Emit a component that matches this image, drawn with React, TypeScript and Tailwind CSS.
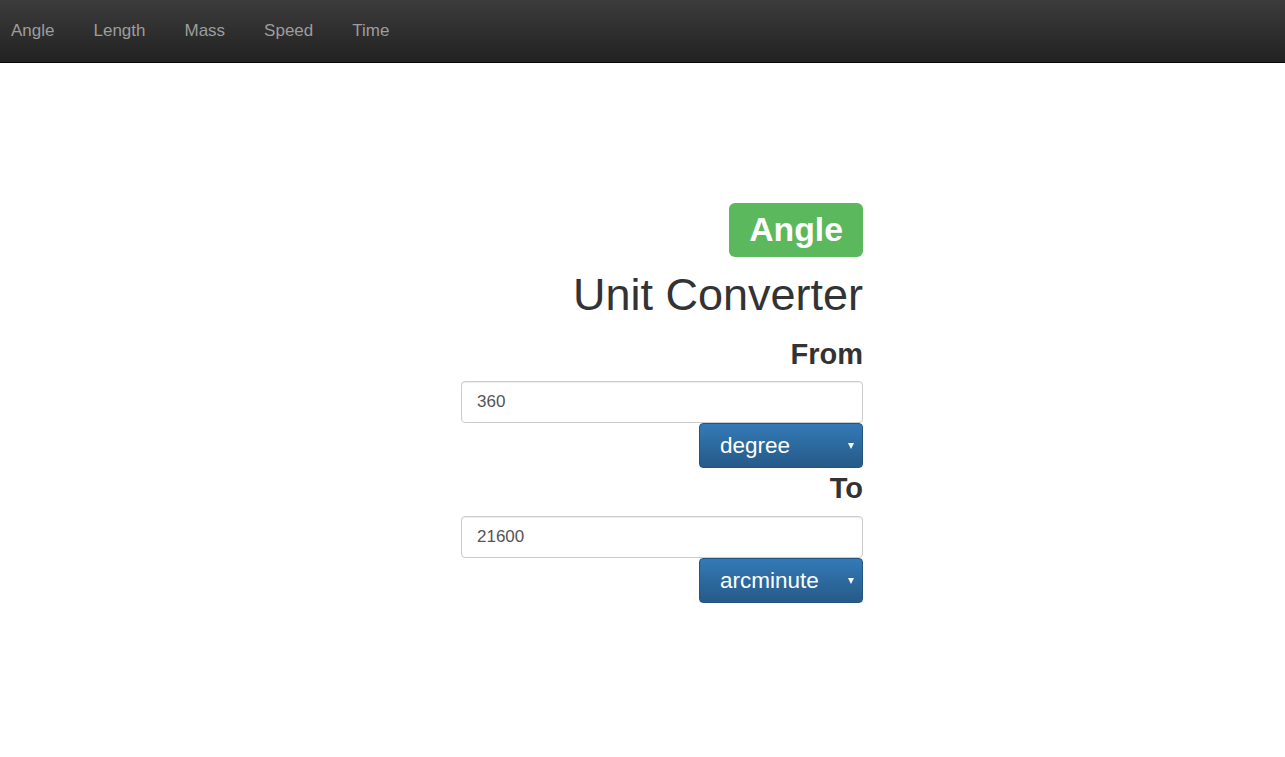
import React, { useState } from 'react';

const categories = ['Angle', 'Length', 'Mass', 'Speed', 'Time'];

const font = { fontFamily: '"Liberation Sans", Arial, sans-serif' };

function UnitSelect({ value }: { value: string }) {
  return (
    <div className="flex justify-end">
      <button className="relative flex h-[45px] w-[164px] items-center rounded-[4px] border border-[#245580] bg-gradient-to-b from-[#337ab7] to-[#265a88] pl-[20px] text-[22.5px] text-white">
        {value}
        <span className="absolute right-[8px] top-[19px] h-0 w-0 border-x-[3.5px] border-t-[6px] border-x-transparent border-t-white" />
      </button>
    </div>
  );
}

function ValueInput({ value }: { value: string }) {
  const [v, setV] = useState(value);
  return (
    <input
      value={v}
      onChange={(e) => setV(e.target.value)}
      className="block h-[42px] w-full rounded-[4px] border border-[#ccc] px-[15px] text-[17px] text-[#555] shadow-[inset_0_1px_1px_rgba(0,0,0,0.075)] outline-none"
    />
  );
}

export default function App() {
  return (
    <div className="min-h-[757px] bg-white text-[#333]" style={font}>
      {/* navbar */}
      <nav className="h-[63px] border-b border-[#080808] bg-gradient-to-b from-[#3c3c3c] to-[#222]">
        <ul className="flex h-[62px] items-center gap-[39px] pb-[1px] pl-[11px]">
          {categories.map((c) => (
            <li key={c} className="text-[17px] text-[#9d9d9d]">
              {c}
            </li>
          ))}
        </ul>
      </nav>

      <div className="pl-[461px]">
        <div className="w-[402px] text-right">
          <div className="mt-[140px] flex justify-end">
            <span className="flex h-[54px] items-center rounded-[6px] bg-[#5cb85c] px-[20px] pb-[2px] text-[33.75px] font-bold text-white">
              Angle
            </span>
          </div>
          <h1 className="mt-[15px] text-[45px] leading-[45px]">Unit Converter</h1>
          <h3 className="mt-[23px] text-[29px] font-bold leading-[29px]">From</h3>
          <div className="mt-[12px]">
            <ValueInput value="360" />
            <UnitSelect value="degree" />
          </div>
          <h3 className="mt-[6px] text-[29px] font-bold leading-[29px]">To</h3>
          <div className="mt-[13px]">
            <ValueInput value="21600" />
            <UnitSelect value="arcminute" />
          </div>
        </div>
      </div>
    </div>
  );
}
